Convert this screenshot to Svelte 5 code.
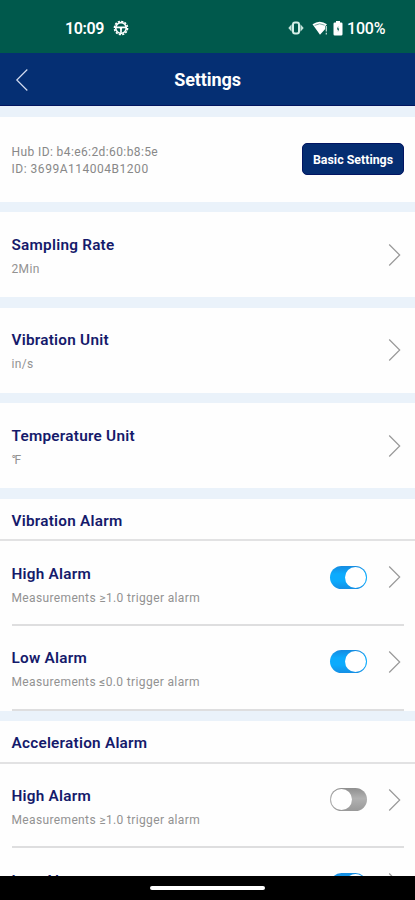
<script>
  const settings = [
    { name: 'Sampling Rate', value: '2Min' },
    { name: 'Vibration Unit', value: 'in/s' },
    { name: 'Temperature Unit', value: '°F', tight: true }
  ];
  const groups = [
    {
      name: 'Vibration Alarm',
      alarms: [
        { name: 'High Alarm', rule: '≥1.0', on: true },
        { name: 'Low Alarm', rule: '≤0.0', on: true }
      ]
    },
    {
      name: 'Acceleration Alarm',
      alarms: [
        { name: 'High Alarm', rule: '≥1.0', on: false },
        { name: 'Low Alarm', rule: '≤0.0', on: true }
      ]
    }
  ];
</script>

{#snippet chevron()}
  <svg class="chevron" width="14" height="24" viewBox="0 0 14 24"><path d="M1.2 1.5 11.7 12 1.2 22.5" /></svg>
{/snippet}

<div class="phone">
  <div class="status">
    <span class="clock">10:09</span>
    <svg class="wheel" width="16" height="16" viewBox="0 0 16 16">
      <circle cx="8" cy="8" r="5.3" fill="none" stroke="#fff" stroke-width="1.7" />
      <circle cx="8" cy="8" r="6.6" fill="none" stroke="#fff" stroke-width="1.5" stroke-dasharray="2.2 1.25" />
      <path d="M3 7.4h10M8 7.4v5.4" fill="none" stroke="#fff" stroke-width="1.7" />
      <path d="M5.8 7h4.4L8 10z" fill="#fff" />
    </svg>
    <svg class="vibrate" width="16" height="14" viewBox="0 0 16 14">
      <rect x="5" y="1.6" width="6" height="10.8" rx="2" fill="none" stroke="#d5eee7" stroke-width="2" />
      <path d="M3.6 3.2v7.6L.3 7zM12.4 3.2v7.6L15.7 7z" fill="#c4e2da" />
    </svg>
    <svg class="wifi" width="16" height="14" viewBox="0 0 16 14">
      <path d="M.5 3.2Q7.7-1.8 15 3.2L13.2 5.3V8L8 13.8z" fill="#fff" />
      <path d="M2.6 4.4Q7.7 1.3 12.7 4.2" fill="none" stroke="#5e978d" stroke-width=".8" />
      <path d="M14.3 5v5.5M14.3 11.8v1.6" stroke="#c8e2db" stroke-width="1.2" />
    </svg>
    <svg class="battery" width="10" height="15" viewBox="0 0 10 15">
      <path d="M3 0h4v1.5h1.2q1.3 0 1.3 1.3v10.5q0 1.2-1.3 1.2H1.8q-1.3 0-1.3-1.2V2.8q0-1.3 1.3-1.3H3z" fill="#fff" />
      <path d="M5.2 5 3.9 8.4h1v2.6l1.3-3.6h-1z" fill="#00594c" />
    </svg>
    <span class="percent">100%</span>
  </div>

  <header>
    <svg class="back" width="14" height="24" viewBox="0 0 14 24"><path d="M12.3 1.5 1.8 12l10.5 10.5" /></svg>
    <h1>Settings</h1>
  </header>

  <main>
    <section class="hub">
      <p class="ids">Hub ID: b4:e6:2d:60:b8:5e<br /><span class="serial">ID: 3699A114004B1200</span></p>
      <button>Basic Settings</button>
    </section>

    {#each settings as item}
      <section class="row setting">
        <div class="label">
          <h2>{item.name}</h2>
          <p class:tight={item.tight}>{item.value}</p>
        </div>
        {@render chevron()}
      </section>
    {/each}

    {#each groups as group}
      <section class="group">
        <h2 class="group-title">{group.name}</h2>
        {#each group.alarms as alarm}
          <div class="row alarm">
            <div class="label">
              <h2>{alarm.name}</h2>
              <p>Measurements {alarm.rule} trigger alarm</p>
            </div>
            <span class="switch" class:on={alarm.on}><i></i></span>
            {@render chevron()}
          </div>
        {/each}
      </section>
    {/each}
  </main>

  <footer><span></span></footer>
</div>

<style>
  :global(body) { margin: 0; }
  .phone {
    width: 415px;
    height: 900px;
    display: flex;
    flex-direction: column;
    overflow: hidden;
    background: #fff;
    font-family: Roboto, "Liberation Sans", sans-serif;
  }
  h1, h2, p { margin: 0; }
  .status {
    flex: none;
    box-sizing: border-box;
    height: 53px;
    padding: 3px 29px 0 65px;
    display: flex;
    align-items: center;
    background: #00594c;
    color: #fff;
    font-size: 16px;
    font-weight: 600;
  }
  .clock { width: 48px; letter-spacing: -.4px; }
  .vibrate { margin-left: auto; margin-right: 8px; }
  .wifi { margin-right: 5px; }
  .battery { margin-right: 4px; }
  .percent { width: 39px; letter-spacing: -.2px; font-weight: 500; }
  header {
    flex: none;
    box-sizing: border-box;
    height: 53px;
    padding: 1px 15px 0;
    display: flex;
    align-items: center;
    background: #052f73;
    border-bottom: 1px solid #02165f;
    color: #fff;
  }
  .back path { fill: none; stroke: #d3dcf0; stroke-width: 1.2; }
  h1 {
    flex: 1;
    padding-right: 14px;
    padding-top: 1px;
    text-align: center;
    font-size: 18px;
    line-height: 24px;
    font-weight: 700;
    letter-spacing: -.1px;
  }
  main {
    flex: 1;
    min-height: 0;
    overflow: hidden;
    display: flex;
    flex-direction: column;
    gap: 10.5px;
    padding-top: 10.8px;
    background: #eaf2fa;
  }
  section { flex: none; background: #fefefe; }
  .hub {
    box-sizing: border-box;
    height: 85px;
    padding: 0 11px 0 11.5px;
    display: flex;
    align-items: center;
    justify-content: space-between;
  }
  .ids {
    padding-top: 3px;
    color: #888;
    font-size: 12px;
    line-height: 17px;
    letter-spacing: .4px;
  }
  .serial { letter-spacing: .52px; }
  button {
    width: 102px;
    height: 32px;
    padding: 1px 0 0;
    border: 1px solid #021562;
    border-radius: 5px;
    background: #052d71;
    color: #fff;
    font: 700 12.4px/29px Roboto, "Liberation Sans", sans-serif;
    white-space: nowrap;
  }
  .row {
    box-sizing: border-box;
    display: flex;
    align-items: center;
  }
  .setting { height: 85px; padding: 0 13px 0 11.5px; }
  .label { flex: 1; }
  h2 {
    color: #151a6b;
    font-size: 15.3px;
    line-height: 24px;
    font-weight: 600;
    letter-spacing: .25px;
  }
  .label p {
    color: #929292;
    font-size: 12px;
    line-height: 24px;
    letter-spacing: .36px;
  }
  .label p.tight { letter-spacing: -1.6px; }
  .setting .label { padding-top: 4px; }
  .chevron path { fill: none; stroke: #999; stroke-width: 1.2; }
  .group-title {
    height: 40.5px;
    padding-left: 11.5px;
    line-height: 44px;
    border-bottom: 2px solid #e2e2e3;
  }
  .alarm {
    height: 84.7px;
    margin: 0 11px 0 11.5px;
    padding: 0 2px 11px 0;
    border-bottom: 2px solid #dededf;
  }
  .alarm .label { padding-top: 17px; }
  .switch {
    width: 37px;
    height: 23px;
    margin-right: 21px;
    box-sizing: border-box;
    border-radius: 12px;
    padding: 1px;
    display: flex;
    background: linear-gradient(#8f8f8f, #b1b1b1 45%, #999);
  }
  .switch i {
    width: 21px;
    height: 21px;
    border-radius: 50%;
    background: #fff;
  }
  .switch.on {
    justify-content: flex-end;
    background: linear-gradient(#168be0, #0cabfd 35%, #0cabfd 65%, #168fe4);
  }
  footer {
    flex: none;
    height: 24px;
    display: flex;
    justify-content: center;
    background: #000;
  }
  footer span {
    width: 115px;
    height: 4px;
    margin-top: 9.5px;
    border-radius: 2px;
    background: #fff;
  }
</style>
